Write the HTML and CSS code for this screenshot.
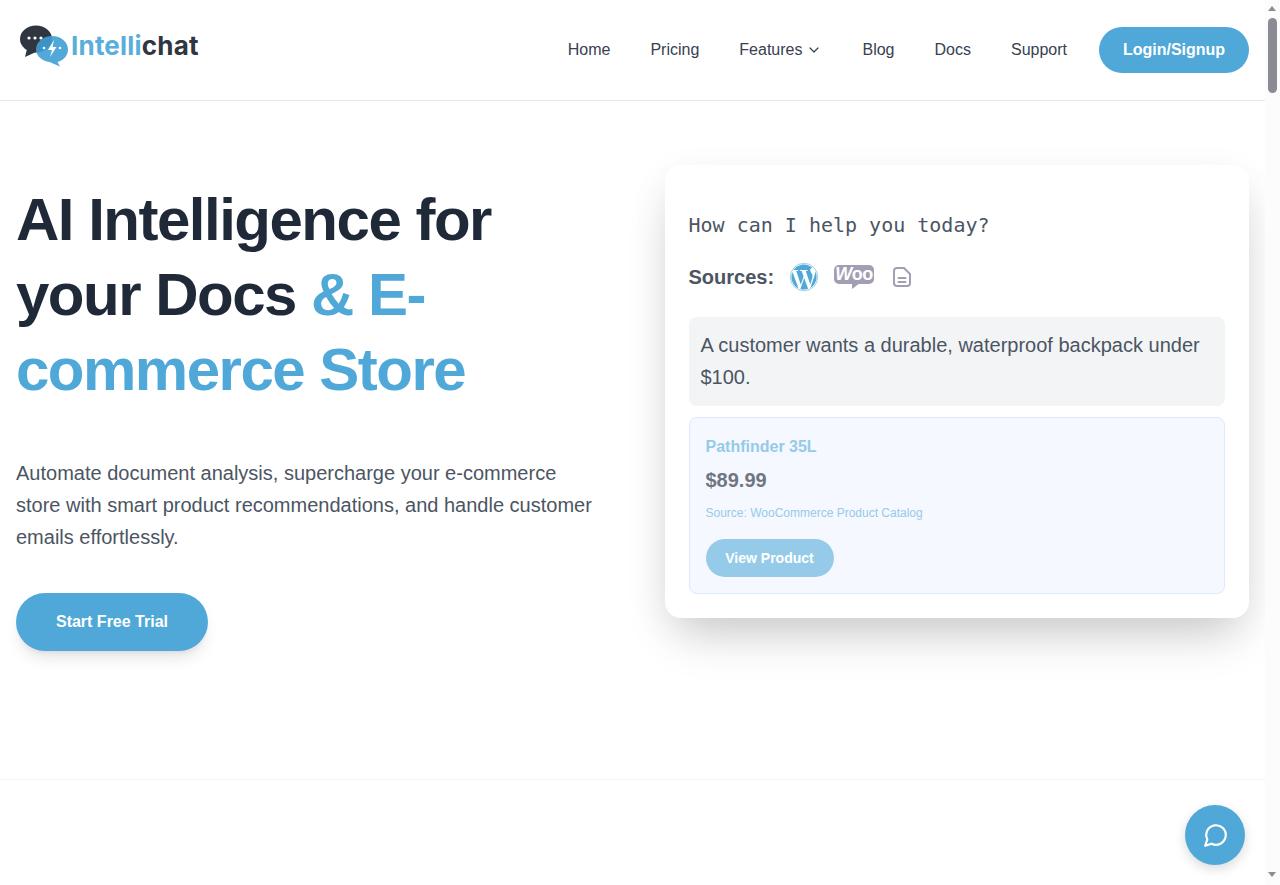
FILE: index.html
```html
<!DOCTYPE html>
<html lang="en">

<head>
  <meta charset="UTF-8" />
  <meta name="viewport" content="width=device-width, initial-scale=1.0" />
  <title>Intellichat</title>
  <link rel="stylesheet" href="styles.css">
</head>

<body>

  <header class="site-header">
    <a class="logo" href="#">
      <svg class="logo-mark" width="50" height="42" viewBox="0 0 50 42">
        <ellipse cx="17" cy="14" rx="16" ry="13.500" fill="#2f3640" />
        <path fill="#2f3640" d="M8 24l-2 8 11-5z" />
        <circle cx="10" cy="13" r="1.600" fill="#fff" />
        <circle cx="16" cy="13" r="1.600" fill="#fff" />
        <circle cx="22" cy="13" r="1.600" fill="#fff" />
        <path fill="#3f9fd3" fill-opacity="0.9" d="M33 11c9 0 16 6 16 13.500 0 6-4.500 11-10.500 12.500l2.500 4.500-10.500-4.500C23 36 17 31 17 24.500 17 17 24 11 33 11z" />
        <path fill="#fff" d="M35 15l-6 10h4l-2 7 6.500-10h-4z" />
        <circle cx="25" cy="23" r="1.300" fill="#fff" />
        <circle cx="41" cy="23" r="1.300" fill="#fff" />
      </svg>
      <span class="logo-text"><span class="logo-blue">Intelli</span>chat</span>
    </a>
    <nav class="main-nav">
      <a href="#">Home</a>
      <a href="#">Pricing</a>
      <a class="has-menu" href="#">Features
        <svg width="16" height="16" viewBox="0 0 24 24" fill="none" stroke="currentColor" stroke-width="1.800" stroke-linecap="round" stroke-linejoin="round"><path d="M6 9l6 6 6-6" /></svg>
      </a>
      <a href="#">Blog</a>
      <a href="#">Docs</a>
      <a href="#">Support</a>
    </nav>
    <a class="login-btn" href="#">Login/Signup</a>
  </header>

  <section class="hero">
    <div class="hero-left">
      <h1>AI Intelligence for your Docs <span class="accent">&amp; E-commerce Store</span></h1>
      <p class="hero-text">Automate document analysis, supercharge your e-commerce store with smart product recommendations, and handle customer emails effortlessly.</p>
      <a class="trial-btn" href="#">Start Free Trial</a>
    </div>

    <div class="demo-card">
      <div class="demo-title">How can I help you today?</div>
      <div class="sources">
        <span class="sources-label">Sources:</span>
        <svg class="wp-icon" width="28" height="28" viewBox="0 0 24 24">
          <circle cx="12" cy="12" r="11.750" fill="none" stroke="#4fa8d8" stroke-width="0.500" />
          <path fill="#4fa8d8" d="M21.469 6.825c.84 1.537 1.318 3.3 1.318 5.175 0 3.979-2.156 7.456-5.363 9.325l3.295-9.527c.615-1.54.82-2.771.82-3.864 0-.405-.026-.78-.07-1.11m-7.981.105c.647-.03 1.232-.105 1.232-.105.582-.075.514-.93-.067-.899 0 0-1.755.135-2.88.135-1.064 0-2.85-.15-2.85-.15-.585-.03-.661.855-.075.885 0 0 .54.061 1.125.09l1.68 4.605-2.37 7.08L5.354 6.9c.649-.03 1.234-.1 1.234-.1.585-.075.516-.93-.065-.896 0 0-1.746.138-2.874.138-.2 0-.438-.008-.69-.015C4.911 3.15 8.235 1.215 12 1.215c2.809 0 5.365 1.072 7.286 2.833-.046-.003-.091-.009-.141-.009-1.06 0-1.812.923-1.812 1.914 0 .89.513 1.643 1.06 2.531.411.72.89 1.643.89 2.977 0 .915-.354 1.994-.821 3.479l-1.075 3.585-3.9-11.61.001.014zM12 22.784c-1.059 0-2.081-.153-3.048-.437l3.237-9.406 3.315 9.087c.024.053.05.101.078.149-1.12.393-2.325.609-3.582.609M1.211 12c0-1.564.336-3.05.935-4.39L7.29 21.709C3.694 19.96 1.212 16.271 1.211 12" />
        </svg>
        <span class="woo-icon"><i>W</i>oo</span>
        <svg class="doc-icon" width="24" height="24" viewBox="0 0 24 24" fill="none" stroke="#a39db5" stroke-width="2" stroke-linecap="round" stroke-linejoin="round">
          <path d="M14 3H7a3 3 0 0 0-3 3v12a3 3 0 0 0 3 3h10a3 3 0 0 0 3-3V9z" />
          <path d="M8.500 13h7" />
          <path d="M8.500 17h7" />
        </svg>
      </div>
      <div class="question">A customer wants a durable, waterproof backpack under $100.</div>
      <div class="product">
        <div class="product-name">Pathfinder 35L</div>
        <div class="product-price">$89.99</div>
        <div class="product-source">Source: WooCommerce Product Catalog</div>
        <a class="product-btn" href="#">View Product</a>
      </div>
    </div>
  </section>

  <section class="next-section"></section>

  <button class="chat-btn" type="button" aria-label="Open chat">
    <svg width="26" height="26" viewBox="0 0 24 24" fill="none" stroke="#fff" stroke-width="2" stroke-linecap="round" stroke-linejoin="round">
      <path d="M7.900 20A9 9 0 1 0 4 16.100L2 22z" />
    </svg>
  </button>

  <div class="scrollbar" aria-hidden="true">
    <span class="scroll-up"></span>
    <span class="scroll-thumb"></span>
    <span class="scroll-down"></span>
  </div>

</body>

</html>
```

FILE: styles.css
```css
* {
  box-sizing: border-box;
}

html {
  scrollbar-width: none;
}

body {
  margin: 0;
  padding-right: 15px;
  font-family: 'Liberation Sans', Arial, sans-serif;
  background: #fff;
  color: #1f2937;
}

a {
  text-decoration: none;
}

.site-header {
  display: flex;
  align-items: center;
  height: 101px;
  padding: 0 16px;
  border-bottom: 1px solid #e5e7eb;
}

.logo {
  display: flex;
  align-items: flex-start;
  height: 44px;
  margin-right: auto;
  margin-left: 3px;
  margin-top: -6px;
}

.logo-mark {
  flex-shrink: 0;
}

.logo-text {
  margin-left: 2px;
  margin-top: 3px;
  font-family: 'Inter', sans-serif;
  font-size: 26px;
  font-weight: 700;
  line-height: 36px;
  letter-spacing: 0.2px;
  color: #2f3640;
}

.logo-blue {
  color: #5aaedb;
}

.main-nav {
  display: flex;
  align-items: center;
  gap: 40px;
  margin-right: 32px;
}

.main-nav a {
  font-size: 16px;
  color: #374151;
}

.main-nav .has-menu {
  display: flex;
  align-items: center;
  gap: 4px;
}

.login-btn {
  display: block;
  width: 150px;
  height: 46px;
  line-height: 46px;
  text-align: center;
  font-size: 16px;
  font-weight: 700;
  color: #fff;
  background: #4fa8d8;
  border-radius: 23px;
}

.hero {
  display: grid;
  grid-template-columns: 1fr 1fr;
  column-gap: 64px;
  align-items: start;
  height: 679px;
  padding: 64px 16px 0;
  border-bottom: 1px solid #f3f4f6;
}

.hero-left {
  padding-top: 17px;
}

.hero h1 {
  margin: 0 0 50px;
  font-size: 60px;
  line-height: 75px;
  font-weight: 700;
  letter-spacing: -1.5px;
  color: #1f2937;
}

.accent {
  color: #4fa8d8;
}

.hero-text {
  margin: 0 0 40px;
  font-size: 20px;
  line-height: 32px;
  color: #4b5563;
}

.trial-btn {
  display: inline-block;
  width: 192px;
  height: 58px;
  line-height: 58px;
  text-align: center;
  font-size: 16px;
  font-weight: 700;
  color: #fff;
  background: #4fa8d8;
  border-radius: 29px;
  box-shadow: 0 10px 15px -3px rgba(0, 0, 0, 0.1), 0 4px 6px -4px rgba(0, 0, 0, 0.1);
}

.demo-card {
  padding: 24px;
  background: #fff;
  border-radius: 16px;
  box-shadow: 0 25px 50px -12px rgba(0, 0, 0, 0.2), 0 10px 40px rgba(0, 0, 0, 0.05);
}

.demo-title {
  padding-top: 22px;
  font-family: 'DejaVu Sans Mono', monospace;
  font-size: 20px;
  line-height: 28px;
  color: #4b5563;
}

.sources {
  display: flex;
  align-items: center;
  height: 32px;
  margin: 22px 0 24px;
}

.sources-label {
  font-size: 20px;
  font-weight: 700;
  color: #4b5563;
  margin-right: 16px;
}

.woo-icon {
  position: relative;
  width: 40px;
  height: 19px;
  margin: -6px 16px 0;
  background: #a39db5;
  border-radius: 5px;
  font-size: 18px;
  font-weight: 700;
  line-height: 19px;
  letter-spacing: -0.5px;
  text-align: center;
  color: #fff;
}

.woo-icon::after {
  content: "";
  position: absolute;
  left: 18px;
  bottom: -5px;
  border-top: 6px solid #a39db5;
  border-right: 8px solid transparent;
}

.question {
  padding: 12px 12px 13px;
  font-size: 20px;
  line-height: 32px;
  color: #4b5563;
  background: #f3f4f6;
  border-radius: 8px;
}

.product {
  margin-top: 11px;
  padding: 16px;
  background: #f5f8ff;
  border: 1px solid #dbeafe;
  border-radius: 8px;
}

.product-name {
  padding-top: 1px;
  font-size: 16px;
  line-height: 24px;
  font-weight: 700;
  color: #95cbe8;
}

.product-price {
  margin-top: 7px;
  font-size: 20px;
  line-height: 28px;
  font-weight: 700;
  color: #6f7682;
}

.product-source {
  margin-top: 11px;
  font-size: 12px;
  line-height: 16px;
  color: #95cbe8;
}

.product-btn {
  display: block;
  width: 128px;
  height: 38px;
  margin-top: 18px;
  line-height: 38px;
  text-align: center;
  font-size: 14px;
  font-weight: 700;
  color: #fff;
  background: #95cbe8;
  border-radius: 19px;
}

.next-section {
  height: 400px;
}

.chat-btn {
  position: fixed;
  right: 35px;
  bottom: 20px;
  display: flex;
  align-items: center;
  justify-content: center;
  width: 60px;
  height: 60px;
  padding: 0 0 0 1px;
  border: none;
  border-radius: 50%;
  background: #4fa8d8;
  box-shadow: 0 4px 12px rgba(0, 0, 0, 0.15);
  cursor: pointer;
}

/* window scrollbar, the screenshot run hides the real one */
.scrollbar {
  position: fixed;
  top: 0;
  right: 0;
  bottom: 0;
  width: 15px;
  background: #fcfcfc;
}

.scroll-up,
.scroll-down {
  position: absolute;
  left: 3px;
  width: 0;
  height: 0;
  border-left: 4.5px solid transparent;
  border-right: 4.5px solid transparent;
}

.scroll-up {
  top: 6px;
  border-bottom: 5px solid #8b8b93;
}

.scroll-down {
  bottom: 8px;
  border-top: 5px solid #8b8b93;
}

.scroll-thumb {
  position: absolute;
  top: 18px;
  left: 3px;
  width: 9px;
  height: 75px;
  background: #8b8b93;
  border-radius: 5px;
}
```
